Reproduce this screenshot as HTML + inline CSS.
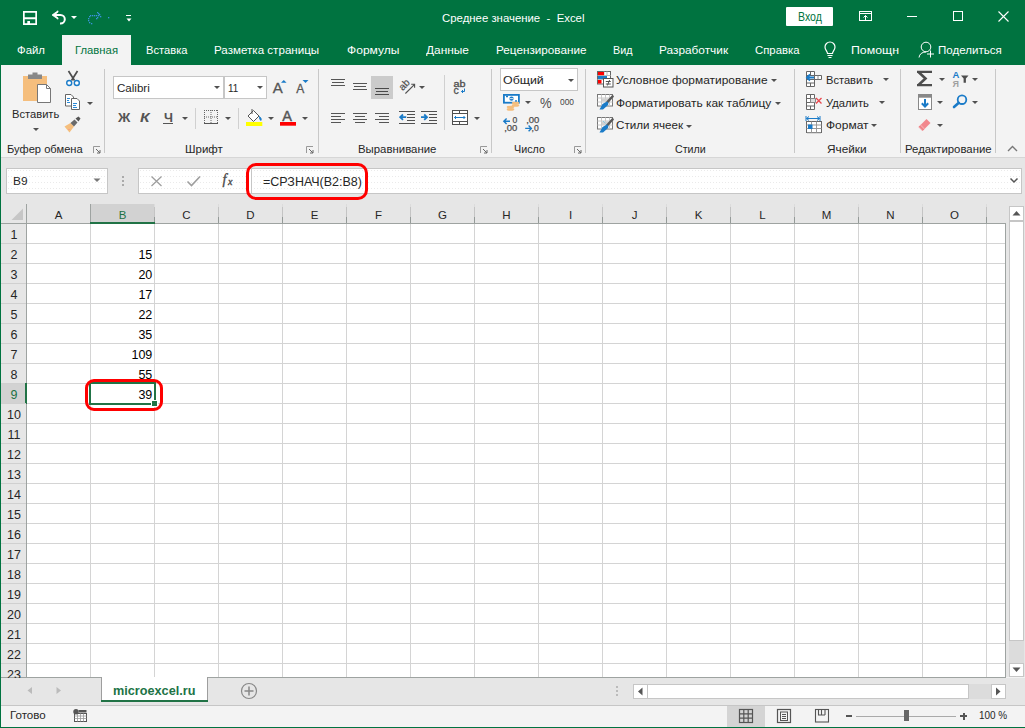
<!DOCTYPE html>
<html><head><meta charset="utf-8">
<style>
*{margin:0;padding:0;box-sizing:border-box}
html,body{width:1025px;height:728px;overflow:hidden;background:#F3F3F3;font-family:"Liberation Sans",sans-serif;color:#262626}
.a{position:absolute;display:block}
.t{position:absolute;white-space:nowrap}
</style></head><body>

<div class="a" style="left:0px;top:0px;width:1025px;height:65px;background:#007340;"></div>
<svg class="a" style="left:23px;top:11px;" width="14" height="14" viewBox="0 0 14 14"><path fill="#fff" fill-rule="evenodd" d="M0 0h14v14h-14z M1.7 1.7v4.5h10.6v-4.5z M1.7 8.3v4h2.6v-2.4h2.7v2.4h5.3v-4z"/></svg>
<svg class="a" style="left:50px;top:9px;" width="18" height="17" viewBox="0 0 18 17"><path d="M3.5 6H10.5a4.3 4.3 0 0 1 0 8.6H10" fill="none" stroke="#fff" stroke-width="2"/><path d="M2 6L8 1.8V3.2L4.2 6L8 8.8V10.2z" fill="#fff" stroke="#fff" stroke-width="0.8"/></svg>
<svg class="a" style="left:70.5px;top:16px;" width="6" height="3.0" viewBox="0 0 6 3.0"><path d="M0 0h6l-3.0 3.0z" fill="#fff"/></svg>
<svg class="a" style="left:86px;top:10px;" width="24" height="16" viewBox="0 0 24 16"><rect x="11" y="2" width="1.3" height="1.3" fill="#3A92DC"/><rect x="12" y="3" width="1.3" height="1.3" fill="#3A92DC"/><rect x="13" y="4" width="1.3" height="1.3" fill="#3A92DC"/><rect x="14" y="6" width="1.3" height="1.3" fill="#3A92DC"/><rect x="12" y="5" width="1.3" height="1.3" fill="#3A92DC"/><rect x="11" y="7" width="1.3" height="1.3" fill="#3A92DC"/><rect x="10" y="8" width="1.3" height="1.3" fill="#3A92DC"/><rect x="4" y="5" width="1.3" height="1.3" fill="#3A92DC"/><rect x="6" y="5" width="1.3" height="1.3" fill="#3A92DC"/><rect x="8" y="5" width="1.3" height="1.3" fill="#3A92DC"/><rect x="10" y="5" width="1.3" height="1.3" fill="#3A92DC"/><rect x="3" y="6" width="1.3" height="1.3" fill="#3A92DC"/><rect x="2" y="8" width="1.3" height="1.3" fill="#3A92DC"/><rect x="2" y="10" width="1.3" height="1.3" fill="#3A92DC"/><rect x="3" y="12" width="1.3" height="1.3" fill="#3A92DC"/><rect x="5" y="13" width="1.3" height="1.3" fill="#3A92DC"/><rect x="22" y="7" width="1.3" height="1.3" fill="#3A92DC"/></svg>
<div class="a" style="left:126px;top:15px;width:5px;height:1px;background:#fff;"></div>
<svg class="a" style="left:125.5px;top:17.5px;" width="6" height="4" viewBox="0 0 6 4"><path d="M0.5 0.5h5l-2.5 3z" fill="#fff"/></svg>
<div class="t" style="left:442.00px;top:11.00px;font-size:11.8px;line-height:15px;color:#fff;transform:scaleX(0.9649);transform-origin:0 0;">Среднее значение&nbsp; - &nbsp;Excel</div>
<div class="a" style="left:786px;top:7px;width:47px;height:19px;background:#fff;border-radius:1px"></div>
<div class="t" style="left:797.50px;top:9.00px;font-size:12.5px;line-height:16px;color:#007340;transform:scaleX(0.8425);transform-origin:0 0;">Вход</div>
<svg class="a" style="left:859px;top:11px;" width="14" height="11" viewBox="0 0 14 11"><rect x="0.5" y="0.5" width="12" height="9" fill="none" stroke="#fff"/><path d="M1 2.5h11" stroke="#fff"/><path d="M6.5 4.5v5" stroke="#fff"/><path d="M4.5 6.5l2-2l2 2" fill="none" stroke="#fff"/></svg>
<div class="a" style="left:907px;top:16px;width:10px;height:1px;background:#fff;"></div>
<svg class="a" style="left:952px;top:10px;" width="12" height="12" viewBox="0 0 12 12"><rect x="1.5" y="1.5" width="9" height="9" fill="none" stroke="#fff"/></svg>
<svg class="a" style="left:997px;top:10px;" width="13" height="13" viewBox="0 0 13 13"><path d="M1.5 1.5L11.5 11.5M11.5 1.5L1.5 11.5" stroke="#fff" stroke-width="1.1"/></svg>
<div class="a" style="left:62px;top:35px;width:69px;height:30px;background:#F3F3F3;"></div>
<div class="t" style="left:16.50px;top:43.00px;font-size:11.8px;line-height:15px;color:#fff;transform:scaleX(0.9646);transform-origin:0 0;">Файл</div>
<div class="t" style="left:145.50px;top:43.00px;font-size:11.8px;line-height:15px;color:#fff;transform:scaleX(0.9454);transform-origin:0 0;">Вставка</div>
<div class="t" style="left:213.80px;top:43.00px;font-size:11.8px;line-height:15px;color:#fff;transform:scaleX(0.9829);transform-origin:0 0;">Разметка страницы</div>
<div class="t" style="left:346.50px;top:43.00px;font-size:11.8px;line-height:15px;color:#fff;transform:scaleX(1.0228);transform-origin:0 0;">Формулы</div>
<div class="t" style="left:426.00px;top:43.00px;font-size:11.8px;line-height:15px;color:#fff;transform:scaleX(1.0080);transform-origin:0 0;">Данные</div>
<div class="t" style="left:495.50px;top:43.00px;font-size:11.8px;line-height:15px;color:#fff;transform:scaleX(0.9935);transform-origin:0 0;">Рецензирование</div>
<div class="t" style="left:612.50px;top:43.00px;font-size:11.8px;line-height:15px;color:#fff;transform:scaleX(0.9130);transform-origin:0 0;">Вид</div>
<div class="t" style="left:658.80px;top:43.00px;font-size:11.8px;line-height:15px;color:#fff;transform:scaleX(1.0042);transform-origin:0 0;">Разработчик</div>
<div class="t" style="left:754.50px;top:43.00px;font-size:11.8px;line-height:15px;color:#fff;transform:scaleX(0.9608);transform-origin:0 0;">Справка</div>
<div class="t" style="left:850.50px;top:43.00px;font-size:11.8px;line-height:15px;color:#fff;transform:scaleX(1.0444);transform-origin:0 0;">Помощн</div>
<div class="t" style="left:938.00px;top:43.00px;font-size:11.8px;line-height:15px;color:#fff;transform:scaleX(0.9780);transform-origin:0 0;">Поделиться</div>
<div class="t" style="left:74.50px;top:43.00px;font-size:11.8px;line-height:15px;color:#007340;transform:scaleX(0.9577);transform-origin:0 0;">Главная</div>
<svg class="a" style="left:823px;top:41px;" width="14" height="19" viewBox="0 0 14 19"><path d="M4.5 12.5C4.5 10.5 2 9 2 6a5 5 0 0 1 10 0C12 9 9.5 10.5 9.5 12.5z" fill="none" stroke="#fff" stroke-width="1.2"/><path d="M4.5 14.5h5M5.5 16.5h3" stroke="#fff" stroke-width="1.1"/></svg>
<svg class="a" style="left:917px;top:41px;" width="19" height="18" viewBox="0 0 19 18"><circle cx="9" cy="6" r="4.8" fill="none" stroke="#fff" stroke-width="1"/><path d="M2 16.5C2.5 13 5 11 9 11" fill="none" stroke="#fff" stroke-width="1"/><path d="M13.5 9.5v7M10 13h7" stroke="#fff" stroke-width="1"/></svg>
<div class="a" style="left:0px;top:65px;width:1025px;height:92px;background:#F3F3F3;"></div>
<div class="a" style="left:0px;top:65px;width:1px;height:663px;background:#007340;"></div>
<div class="a" style="left:1px;top:157px;width:1024px;height:1px;background:#D6D6D6;"></div>
<div class="a" style="left:104px;top:69px;width:1px;height:84px;background:#C8C8C8;"></div>
<svg class="a" style="left:22px;top:72px;" width="30" height="32" viewBox="0 0 30 32"><rect x="1" y="4" width="24" height="25" fill="#F5BE7D"/><path d="M6 2.5h14v4.5H6z" fill="#888"/><rect x="10.5" y="0.5" width="5" height="3" fill="#888"/><path d="M15.5 12.5h9l4 4v14h-13z" fill="#fff" stroke="#777" stroke-width="1"/><path d="M24.5 12.5v4h4" fill="none" stroke="#777"/></svg>
<div class="t" style="left:11.50px;top:107.00px;font-size:11.8px;line-height:15px;color:#262626;transform:scaleX(0.9454);transform-origin:0 0;">Вставить</div>
<svg class="a" style="left:32.5px;top:128px;" width="6" height="3.0" viewBox="0 0 6 3.0"><path d="M0 0h6l-3.0 3.0z" fill="#505050"/></svg>
<svg class="a" style="left:65px;top:70px;" width="16" height="17" viewBox="0 0 16 17"><path d="M3.5 1L9.5 10.5M12.5 1L6.5 10.5" stroke="#4D4D4D" stroke-width="1.7"/><circle cx="4.2" cy="13" r="2.5" fill="#fff" stroke="#1A7BC8" stroke-width="1.4"/><circle cx="11.8" cy="13" r="2.5" fill="#fff" stroke="#1A7BC8" stroke-width="1.4"/></svg>
<svg class="a" style="left:64px;top:94px;" width="17" height="16" viewBox="0 0 17 16"><path d="M1.5 0.5h5.5l2.5 2.5v9h-8z" fill="#fff" stroke="#666"/><path d="M7.5 4.5h5.5l2.5 2.5v8.5h-8z" fill="#fff" stroke="#666"/><path d="M3 4.5h3M3 6.5h2M3 8.5h3M9 9.5h4M9 11.5h3M9 13.5h4" stroke="#2B8AD6"/></svg>
<svg class="a" style="left:86.5px;top:102px;" width="6" height="3.0" viewBox="0 0 6 3.0"><path d="M0 0h6l-3.0 3.0z" fill="#505050"/></svg>
<svg class="a" style="left:63px;top:116px;" width="20" height="18" viewBox="0 0 20 18"><path d="M1.5 10.5L7.5 7L11 10.5L6.5 16.5z" fill="#F5BE7D"/><path d="M7.5 7L11.5 3.5L14.5 6.5L11 10.5z" fill="#6A6A6A"/><path d="M12.5 2.5L15.5 0.5L17.5 2.5L15.5 5.5z" fill="#555"/><path d="M5.5 14l1-1" stroke="#F08A8F" stroke-width="1"/></svg>
<div class="t" style="left:6.60px;top:142.00px;font-size:11.2px;line-height:14px;color:#262626;transform:scaleX(0.9953);transform-origin:0 0;">Буфер обмена</div>
<svg class="a" style="left:93px;top:146px;" width="8" height="8" viewBox="0 0 8 8"><path d="M0.5 7V0.5H7" fill="none" stroke="#999" stroke-width="1"/><path d="M3 3L7 7M7 4v3H4" fill="none" stroke="#666" stroke-width="1"/></svg>
<div class="a" style="left:318px;top:69px;width:1px;height:84px;background:#C8C8C8;"></div>
<div class="a" style="left:113px;top:76px;width:111px;height:23px;background:#fff;border:1px solid #C6C6C6"></div>
<div class="a" style="left:224px;top:76px;width:43px;height:23px;background:#fff;border:1px solid #C6C6C6"></div>
<div class="t" style="left:116.80px;top:81.00px;font-size:11.8px;line-height:15px;color:#262626;transform:scaleX(0.9805);transform-origin:0 0;">Calibri</div>
<svg class="a" style="left:213.5px;top:86px;" width="6" height="3.0" viewBox="0 0 6 3.0"><path d="M0 0h6l-3.0 3.0z" fill="#505050"/></svg>
<div class="t" style="left:227.70px;top:81.00px;font-size:11.8px;line-height:15px;color:#262626;transform:scaleX(0.8393);transform-origin:0 0;">11</div>
<svg class="a" style="left:256.5px;top:86px;" width="6" height="3.0" viewBox="0 0 6 3.0"><path d="M0 0h6l-3.0 3.0z" fill="#505050"/></svg>
<svg class="a" style="left:272px;top:78px;" width="16" height="16" viewBox="0 0 16 16"><text x="0.8" y="15" font-family="Liberation Sans" font-size="15" fill="#555" stroke="#555" stroke-width="0.3">A</text><path d="M9 4.8l2.8-2.8l2.8 2.8z" fill="#1A7BC8"/></svg>
<svg class="a" style="left:295px;top:78px;" width="14" height="16" viewBox="0 0 14 16"><text x="1.2" y="15" font-family="Liberation Sans" font-size="12" fill="#555" stroke="#555" stroke-width="0.3">A</text><path d="M7.5 2h6l-3 3z" fill="#1A7BC8"/></svg>
<div class="t" style="left:117.97px;top:110.00px;font-size:12.5px;line-height:16px;color:#555;font-weight:bold;transform:scaleX(1.0929);transform-origin:0 0;">Ж</div>
<div class="t" style="left:140.40px;top:110.00px;font-size:12.5px;line-height:16px;color:#555;font-weight:bold;transform:scaleX(1.2488);transform-origin:0 0;font-style:italic;">К</div>
<div class="t" style="left:163.50px;top:110.00px;font-size:12.5px;line-height:16px;color:#555;font-weight:bold;transform:scaleX(1.0213);transform-origin:0 0;">Ч</div>
<div class="a" style="left:163px;top:123px;width:10px;height:1px;background:#555;"></div>
<svg class="a" style="left:181.5px;top:116.5px;" width="6" height="3.0" viewBox="0 0 6 3.0"><path d="M0 0h6l-3.0 3.0z" fill="#505050"/></svg>
<div class="a" style="left:195px;top:108px;width:1px;height:21px;background:#D0D0D0;"></div>
<svg class="a" style="left:204px;top:110px;" width="14" height="14" viewBox="0 0 14 14"><path d="M0.5 0v13M13.5 0v13M7 0v13M0 0.5h14M0 7h14" fill="none" stroke="#666" stroke-width="1" stroke-dasharray="1 1"/><path d="M0 13.5h14" stroke="#555" stroke-width="1"/></svg>
<svg class="a" style="left:224.5px;top:116.5px;" width="6" height="3.0" viewBox="0 0 6 3.0"><path d="M0 0h6l-3.0 3.0z" fill="#505050"/></svg>
<div class="a" style="left:238px;top:108px;width:1px;height:21px;background:#D0D0D0;"></div>
<svg class="a" style="left:245px;top:108px;" width="19" height="19" viewBox="0 0 19 19"><path d="M3 8L8.5 2.5L14 8L8.5 13.5z" fill="#fff" stroke="#555"/><path d="M7 1v5" stroke="#555"/><path d="M14.5 8.5c1.5 1.5 2 2.5 1.5 4c-1-0.5-1.5-2-1.5-4z" fill="#1A7BC8" stroke="#1A7BC8"/><rect x="1" y="14" width="16.3" height="4" fill="#FFFF00"/></svg>
<svg class="a" style="left:267.5px;top:116.5px;" width="6" height="3.0" viewBox="0 0 6 3.0"><path d="M0 0h6l-3.0 3.0z" fill="#505050"/></svg>
<svg class="a" style="left:279px;top:107px;" width="18" height="19" viewBox="0 0 18 19"><text x="3.2" y="14" font-family="Liberation Sans" font-size="14.5" fill="#555" stroke="#555" stroke-width="0.4">A</text><rect x="1" y="15" width="16" height="3.7" fill="#FF0000"/></svg>
<svg class="a" style="left:302.0px;top:116.5px;" width="6" height="3.0" viewBox="0 0 6 3.0"><path d="M0 0h6l-3.0 3.0z" fill="#505050"/></svg>
<div class="t" style="left:184.80px;top:142.00px;font-size:11.2px;line-height:14px;color:#262626;transform:scaleX(1.0258);transform-origin:0 0;">Шрифт</div>
<svg class="a" style="left:306px;top:146px;" width="8" height="8" viewBox="0 0 8 8"><path d="M0.5 7V0.5H7" fill="none" stroke="#999" stroke-width="1"/><path d="M3 3L7 7M7 4v3H4" fill="none" stroke="#666" stroke-width="1"/></svg>
<div class="a" style="left:491px;top:69px;width:1px;height:84px;background:#C8C8C8;"></div>
<div class="a" style="left:444px;top:75px;width:1px;height:55px;background:#D0D0D0;"></div>
<svg class="a" style="left:331px;top:79px;" width="16" height="11" viewBox="0 0 16 11"><rect x="0" y="0" width="14" height="1" fill="#555"/><rect x="1" y="3" width="12" height="1" fill="#555"/><rect x="0" y="6" width="14" height="1" fill="#555"/></svg>
<svg class="a" style="left:353px;top:83px;" width="16" height="11" viewBox="0 0 16 11"><rect x="0" y="0" width="14" height="1" fill="#555"/><rect x="1" y="3" width="12" height="1" fill="#555"/><rect x="0" y="6" width="14" height="1" fill="#555"/></svg>
<div class="a" style="left:371px;top:76px;width:22px;height:23px;background:#CBCBCB;"></div>
<svg class="a" style="left:375px;top:88px;" width="16" height="11" viewBox="0 0 16 11"><rect x="0" y="0" width="14" height="1" fill="#4A4A4A"/><rect x="1" y="3" width="12" height="1" fill="#4A4A4A"/><rect x="0" y="6" width="14" height="1" fill="#4A4A4A"/></svg>
<svg class="a" style="left:398px;top:77px;" width="20" height="18" viewBox="0 0 20 18"><g transform="rotate(-45 6.5 8)"><text x="6.5" y="11" text-anchor="middle" font-family="Liberation Sans" font-size="10" fill="#505050" stroke="#505050" stroke-width="0.2">ab</text></g><path d="M7.4 16.5L16.6 7.3M13.2 7.3h3.4v3.4" fill="none" stroke="#505050" stroke-width="1.1"/></svg>
<svg class="a" style="left:419.0px;top:85.5px;" width="6" height="3.0" viewBox="0 0 6 3.0"><path d="M0 0h6l-3.0 3.0z" fill="#505050"/></svg>
<svg class="a" style="left:452px;top:78px;" width="16" height="17" viewBox="0 0 16 17"><text x="1.6" y="8.6" textLength="12" lengthAdjust="spacingAndGlyphs" font-family="Liberation Sans" font-size="8.2" fill="#505050" stroke="#505050" stroke-width="0.3">ab</text><text x="1.4" y="15.6" font-family="Liberation Sans" font-size="10.5" fill="#505050" stroke="#505050" stroke-width="0.3">c</text><path d="M12.5 10.5v3H9.5M11 12l-1.5 1.5L11 15" fill="none" stroke="#1A7BC8" stroke-width="1"/></svg>
<svg class="a" style="left:331px;top:113px;" width="16" height="14" viewBox="0 0 16 14"><rect x="0" y="0" width="14" height="1" fill="#555"/><rect x="0" y="3" width="10" height="1" fill="#555"/><rect x="0" y="6" width="14" height="1" fill="#555"/><rect x="0" y="9" width="10" height="1" fill="#555"/></svg>
<svg class="a" style="left:353px;top:113px;" width="16" height="14" viewBox="0 0 16 14"><rect x="0" y="0" width="14" height="1" fill="#555"/><rect x="2" y="3" width="10" height="1" fill="#555"/><rect x="0" y="6" width="14" height="1" fill="#555"/><rect x="2" y="9" width="10" height="1" fill="#555"/></svg>
<svg class="a" style="left:375px;top:113px;" width="16" height="14" viewBox="0 0 16 14"><rect x="0" y="0" width="14" height="1" fill="#555"/><rect x="4" y="3" width="10" height="1" fill="#555"/><rect x="0" y="6" width="14" height="1" fill="#555"/><rect x="4" y="9" width="10" height="1" fill="#555"/></svg>
<svg class="a" style="left:399px;top:111px;" width="17" height="14" viewBox="0 0 17 14"><path d="M0 0.5h16M8 3.5h8M8 6.5h8M8 9.5h8M0 12.5h16" stroke="#505050" stroke-width="1"/><path d="M1.2 6.2h6M4 3.5L1.2 6.2L4 8.9" fill="none" stroke="#1A7BC8" stroke-width="1.8"/></svg>
<svg class="a" style="left:421px;top:111px;" width="17" height="14" viewBox="0 0 17 14"><path d="M0 0.5h16M8 3.5h8M8 6.5h8M8 9.5h8M0 12.5h16" stroke="#505050" stroke-width="1"/><path d="M0 6.2h6M3.2 3.5L6 6.2L3.2 8.9" fill="none" stroke="#1A7BC8" stroke-width="1.8"/></svg>
<svg class="a" style="left:452px;top:110px;" width="16" height="16" viewBox="0 0 16 16"><rect x="0.5" y="0.5" width="15" height="14" fill="#fff" stroke="#505050"/><path d="M0.5 3.5h15M0.5 11.5h15M7.5 0.5v3M7.5 11.5v3" stroke="#505050"/><path d="M2.5 7.5h10.5M4 6L2.5 7.5L4 9M11.5 6L13 7.5L11.5 9" fill="none" stroke="#1A7BC8"/></svg>
<svg class="a" style="left:473.5px;top:116.5px;" width="6" height="3.0" viewBox="0 0 6 3.0"><path d="M0 0h6l-3.0 3.0z" fill="#505050"/></svg>
<div class="t" style="left:357.80px;top:142.00px;font-size:11.2px;line-height:14px;color:#262626;transform:scaleX(1.0180);transform-origin:0 0;">Выравнивание</div>
<svg class="a" style="left:480px;top:146px;" width="8" height="8" viewBox="0 0 8 8"><path d="M0.5 7V0.5H7" fill="none" stroke="#999" stroke-width="1"/><path d="M3 3L7 7M7 4v3H4" fill="none" stroke="#666" stroke-width="1"/></svg>
<div class="a" style="left:585px;top:69px;width:1px;height:84px;background:#C8C8C8;"></div>
<div class="a" style="left:500px;top:68px;width:78px;height:23px;background:#fff;border:1px solid #C6C6C6"></div>
<div class="t" style="left:503.20px;top:73.00px;font-size:11.8px;line-height:15px;color:#262626;transform:scaleX(1.0510);transform-origin:0 0;">Общий</div>
<svg class="a" style="left:567.5px;top:79px;" width="6" height="3.0" viewBox="0 0 6 3.0"><path d="M0 0h6l-3.0 3.0z" fill="#505050"/></svg>
<svg class="a" style="left:502px;top:93px;" width="19" height="19" viewBox="0 0 19 19"><rect x="1.9" y="1.9" width="15" height="7.8" fill="#fff" stroke="#1A7BC8" stroke-width="1.8"/><path d="M4 3.5h2M13 8h2" stroke="#1A7BC8" stroke-width="1.5"/><circle cx="9.5" cy="5.6" r="2.2" fill="#1A7BC8"/><path d="M7.5 5.6h4" stroke="#fff" stroke-width="0.8"/><ellipse cx="13.5" cy="10" rx="3.8" ry="1.3" fill="#F5BE7D"/><ellipse cx="13.5" cy="12.4" rx="3.8" ry="1.3" fill="#F5BE7D"/><ellipse cx="8.5" cy="14" rx="3.8" ry="1.3" fill="#F5BE7D"/><ellipse cx="8.5" cy="16.4" rx="3.8" ry="1.3" fill="#F5BE7D"/></svg>
<svg class="a" style="left:524.5px;top:101px;" width="6" height="3.0" viewBox="0 0 6 3.0"><path d="M0 0h6l-3.0 3.0z" fill="#505050"/></svg>
<div class="t" style="left:539.60px;top:94.00px;font-size:14px;line-height:18px;color:#505050;transform:scaleX(0.9310);transform-origin:0 0;">%</div>
<div class="t" style="left:560.00px;top:96.55px;font-size:8.5px;line-height:11px;color:#444;transform:scaleX(0.9863);transform-origin:0 0;">000</div>
<svg class="a" style="left:502px;top:116px;" width="18" height="17" viewBox="0 0 18 17"><path d="M1.8 5.2h6.2M4.6 2.4L1.8 5.2L4.6 8" fill="none" stroke="#1A7BC8" stroke-width="1.4"/><g font-family="Liberation Sans" font-size="8.6" fill="#505050" stroke="#505050" stroke-width="0.25"><text x="10.6" y="7.4">0</text><text x="2.2" y="15.3" textLength="13.2" lengthAdjust="spacingAndGlyphs">,00</text></g></svg>
<svg class="a" style="left:524px;top:116px;" width="18" height="17" viewBox="0 0 18 17"><g font-family="Liberation Sans" font-size="8.6" fill="#505050" stroke="#505050" stroke-width="0.25"><text x="2.2" y="7.4" textLength="13.2" lengthAdjust="spacingAndGlyphs">,00</text><text x="7.5" y="15.3">,0</text></g><path d="M1.2 12.4h6M4.6 9.6L7.4 12.4L4.6 15.2" fill="none" stroke="#1A7BC8" stroke-width="1.4"/></svg>
<div class="t" style="left:514.40px;top:142.00px;font-size:11.2px;line-height:14px;color:#262626;transform:scaleX(0.9627);transform-origin:0 0;">Число</div>
<svg class="a" style="left:574px;top:146px;" width="8" height="8" viewBox="0 0 8 8"><path d="M0.5 7V0.5H7" fill="none" stroke="#999" stroke-width="1"/><path d="M3 3L7 7M7 4v3H4" fill="none" stroke="#666" stroke-width="1"/></svg>
<div class="a" style="left:794px;top:69px;width:1px;height:84px;background:#C8C8C8;"></div>
<svg class="a" style="left:596px;top:70px;" width="18" height="18" viewBox="0 0 18 18"><rect x="1.5" y="1.5" width="13" height="12.5" fill="#fff" stroke="#666"/><path d="M1.5 5.5h13M1.5 9.5h13M8 1.5v12.5M11 1.5v4" stroke="#BBB"/><rect x="2" y="2" width="6" height="3.2" fill="#FF0000"/><rect x="2" y="6" width="9" height="3" fill="#1A7BC8"/><rect x="2" y="10" width="3.5" height="3.5" fill="#FF0000"/><rect x="7.5" y="8.5" width="9.5" height="8.5" fill="#fff" stroke="#555"/><path d="M9.8 11.5h5M9.8 14h5M13.6 10l-2.2 5.5" stroke="#444" stroke-width="0.9"/></svg>
<div class="t" style="left:616.40px;top:73.00px;font-size:11.5px;line-height:14px;color:#262626;transform:scaleX(1.0364);transform-origin:0 0;">Условное форматирование</div>
<svg class="a" style="left:770.8px;top:78.5px;" width="6" height="3.0" viewBox="0 0 6 3.0"><path d="M0 0h6l-3.0 3.0z" fill="#505050"/></svg>
<svg class="a" style="left:596px;top:93px;" width="18" height="18" viewBox="0 0 18 18"><rect x="1.5" y="1.5" width="15" height="11.5" fill="#fff" stroke="#777"/><path d="M1.5 5h15M1.5 9h15M5.5 1.5v11.5M9.5 1.5v11.5M13.5 1.5v11.5" stroke="#C8C8C8"/><rect x="6" y="5.5" width="7" height="3" fill="#D0D0D0"/><path d="M16.5 3.5L11.5 9" stroke="#5A5A5A" stroke-width="2.6" stroke-linecap="round"/><path d="M11 8.5c1.5 1 2 2.5 0.5 4L7 16.5H3.5c1-1.5 1.5-3 3-5.5z" fill="#1A7BC8"/></svg>
<div class="t" style="left:616.40px;top:96.00px;font-size:11.5px;line-height:14px;color:#262626;transform:scaleX(1.0380);transform-origin:0 0;">Форматировать как таблицу</div>
<svg class="a" style="left:774.5px;top:101.5px;" width="6" height="3.0" viewBox="0 0 6 3.0"><path d="M0 0h6l-3.0 3.0z" fill="#505050"/></svg>
<svg class="a" style="left:596px;top:116px;" width="18" height="18" viewBox="0 0 18 18"><rect x="1.5" y="1.5" width="15" height="11.5" fill="#fff" stroke="#777"/><path d="M1.5 5h15M1.5 9h15M5.5 1.5v11.5M9.5 1.5v11.5M13.5 1.5v11.5" stroke="#C8C8C8"/><rect x="6" y="5.5" width="7" height="3.5" fill="#D0D0D0"/><path d="M7 5l4 4" stroke="#5BC0EB" stroke-dasharray="1 1"/><path d="M16.5 3.5L11.5 9" stroke="#5A5A5A" stroke-width="2.6" stroke-linecap="round"/><path d="M11 8.5c1.5 1 2 2.5 0.5 4L7 16.5H3.5c1-1.5 1.5-3 3-5.5z" fill="#1A7BC8"/></svg>
<div class="t" style="left:616.40px;top:118.00px;font-size:11.5px;line-height:14px;color:#262626;transform:scaleX(1.0110);transform-origin:0 0;">Стили ячеек</div>
<svg class="a" style="left:686.3px;top:124.5px;" width="6" height="3.0" viewBox="0 0 6 3.0"><path d="M0 0h6l-3.0 3.0z" fill="#505050"/></svg>
<div class="t" style="left:674.80px;top:142.00px;font-size:11.2px;line-height:14px;color:#262626;transform:scaleX(0.9549);transform-origin:0 0;">Стили</div>
<div class="a" style="left:900px;top:69px;width:1px;height:84px;background:#C8C8C8;"></div>
<svg class="a" style="left:805px;top:70px;" width="18" height="18" viewBox="0 0 18 18"><path d="M1.5 1.5h8v15h-8z" fill="#fff" stroke="#666"/><path d="M1.5 5.5h8M1.5 9.5h8M1.5 13h8M5.5 1.5v3.5M5.5 13v3.5" stroke="#666"/><path d="M9.5 5.5h7v4h-7z" fill="#fff" stroke="#666"/><path d="M13 5.5v4" stroke="#888"/><path d="M2 7.5h7M5 4.5L2 7.5L5 10.5" fill="none" stroke="#1A7BC8" stroke-width="1.8"/></svg>
<div class="t" style="left:825.50px;top:73.00px;font-size:11.5px;line-height:14px;color:#262626;transform:scaleX(0.9639);transform-origin:0 0;">Вставить</div>
<svg class="a" style="left:882.5px;top:78px;" width="6" height="3.0" viewBox="0 0 6 3.0"><path d="M0 0h6l-3.0 3.0z" fill="#505050"/></svg>
<svg class="a" style="left:805px;top:93px;" width="18" height="18" viewBox="0 0 18 18"><path d="M1.5 1.5h8v15h-8z" fill="#fff" stroke="#666"/><path d="M1.5 5.5h8M1.5 9.5h8M1.5 13h8M5.5 1.5v3.5M5.5 13v3.5" stroke="#666"/><path d="M5.5 5.5h5v4h-5z" fill="#ddd" stroke="#888"/><path d="M11 5l5.5 5.5M16.5 5L11 10.5" stroke="#E8474D" stroke-width="1.3"/></svg>
<div class="t" style="left:825.50px;top:96.00px;font-size:11.5px;line-height:14px;color:#262626;transform:scaleX(0.9766);transform-origin:0 0;">Удалить</div>
<svg class="a" style="left:878.5px;top:101px;" width="6" height="3.0" viewBox="0 0 6 3.0"><path d="M0 0h6l-3.0 3.0z" fill="#505050"/></svg>
<svg class="a" style="left:805px;top:116px;" width="18" height="18" viewBox="0 0 18 18"><path d="M1.5 2.5h13" stroke="#1A7BC8" stroke-width="1"/><path d="M1 0v5M15 0v5" stroke="#1A7BC8"/><path d="M4 0.5L1.5 2.5L4 4.5M12 0.5L14.5 2.5L12 4.5" fill="none" stroke="#1A7BC8"/><rect x="1.5" y="5.5" width="15" height="11" fill="#fff" stroke="#666"/><path d="M1.5 9h15M1.5 12.5h15M6.5 5.5v11M11.5 5.5v11" stroke="#999"/><rect x="3" y="8.5" width="4.5" height="4.5" fill="#1A7BC8"/><path d="M2 16.8h14" stroke="#999"/></svg>
<div class="t" style="left:825.50px;top:118.00px;font-size:11.5px;line-height:14px;color:#262626;transform:scaleX(1.0410);transform-origin:0 0;">Формат</div>
<svg class="a" style="left:870.5px;top:124px;" width="6" height="3.0" viewBox="0 0 6 3.0"><path d="M0 0h6l-3.0 3.0z" fill="#505050"/></svg>
<div class="t" style="left:827.10px;top:142.00px;font-size:11.2px;line-height:14px;color:#262626;transform:scaleX(1.0565);transform-origin:0 0;">Ячейки</div>
<div class="a" style="left:995px;top:69px;width:1px;height:84px;background:#C8C8C8;"></div>
<svg class="a" style="left:916px;top:70px;" width="18" height="17" viewBox="0 0 18 17"><path d="M1 1.8h15M1 15.2h15" stroke="#4D4D4D" stroke-width="2.2"/><path d="M2.5 2L9.5 8.5L2.5 15" fill="none" stroke="#4D4D4D" stroke-width="2.6"/></svg>
<svg class="a" style="left:938.5px;top:78px;" width="6" height="3.0" viewBox="0 0 6 3.0"><path d="M0 0h6l-3.0 3.0z" fill="#505050"/></svg>
<svg class="a" style="left:952px;top:70px;" width="18" height="18" viewBox="0 0 18 18"><text x="0.6" y="8" font-family="Liberation Sans" font-size="9.5" font-weight="bold" fill="#1A7BC8">A</text><text x="0.6" y="16.8" font-family="Liberation Sans" font-size="9" font-weight="bold" fill="#A0A0A0">Я</text><path d="M9 5.6h7.5l-2.6 3v4.2h-2.3v-4.2z" fill="#4D4D4D"/></svg>
<svg class="a" style="left:971.5px;top:78px;" width="6" height="3.0" viewBox="0 0 6 3.0"><path d="M0 0h6l-3.0 3.0z" fill="#505050"/></svg>
<svg class="a" style="left:917px;top:93px;" width="16" height="17" viewBox="0 0 16 17"><rect x="1.5" y="1.5" width="13" height="15" fill="#fff" stroke="#888"/><rect x="1" y="1" width="14" height="3.7" fill="#888"/><path d="M8 6v7.5M4.8 10.3L8 13.5L11.2 10.3" fill="none" stroke="#1A7BC8" stroke-width="2"/></svg>
<svg class="a" style="left:936.5px;top:101px;" width="6" height="3.0" viewBox="0 0 6 3.0"><path d="M0 0h6l-3.0 3.0z" fill="#505050"/></svg>
<svg class="a" style="left:952px;top:93px;" width="17" height="17" viewBox="0 0 17 17"><circle cx="10" cy="6.7" r="4.3" fill="none" stroke="#1A7BC8" stroke-width="1.8"/><path d="M6.8 9.8L2 14" stroke="#1A7BC8" stroke-width="2.6" stroke-linecap="round"/></svg>
<svg class="a" style="left:971.5px;top:101px;" width="6" height="3.0" viewBox="0 0 6 3.0"><path d="M0 0h6l-3.0 3.0z" fill="#505050"/></svg>
<svg class="a" style="left:917px;top:116px;" width="16" height="16" viewBox="0 0 16 16"><path d="M1.5 11L9.5 3L13.5 7L5.5 15z" fill="#F2878D"/><path d="M1.5 11L4 8.5L8 12.5L5.5 15z" fill="#F5A3A7"/><path d="M2.5 10l4 4" stroke="#E86A70" stroke-width="1"/></svg>
<svg class="a" style="left:936.5px;top:124px;" width="6" height="3.0" viewBox="0 0 6 3.0"><path d="M0 0h6l-3.0 3.0z" fill="#505050"/></svg>
<div class="t" style="left:904.60px;top:142.00px;font-size:11.2px;line-height:14px;color:#262626;transform:scaleX(1.0159);transform-origin:0 0;">Редактирование</div>
<svg class="a" style="left:1007px;top:145px;" width="11" height="7" viewBox="0 0 11 7"><path d="M1 6L5.5 1.5L10 6" fill="none" stroke="#777" stroke-width="1.4"/></svg>
<div class="a" style="left:1px;top:158px;width:1024px;height:46px;background:#E6E6E6;"></div>
<div class="a" style="left:6px;top:168px;width:102px;height:26px;background:#fff;border:1px solid #C6C6C6;background-image:radial-gradient(circle at 1.5px 1.5px,#EAEAEA 0.5px,transparent 0.9px);background-size:3px 6px"></div>
<div class="t" style="left:13.30px;top:174.00px;font-size:11.5px;line-height:14px;color:#262626;transform:scaleX(1.0364);transform-origin:0 0;">B9</div>
<svg class="a" style="left:93px;top:178px;" width="9" height="5" viewBox="0 0 9 5"><path d="M0.5 0.5h7l-3.5 3.5z" fill="#777"/></svg>
<div class="a" style="left:122px;top:176px;width:2px;height:2px;background:#AAAAAA;"></div>
<div class="a" style="left:122px;top:180px;width:2px;height:2px;background:#AAAAAA;"></div>
<div class="a" style="left:122px;top:184px;width:2px;height:2px;background:#AAAAAA;"></div>
<div class="a" style="left:138px;top:168px;width:884px;height:26px;background:#fff;border:1px solid #C6C6C6;background-image:radial-gradient(circle at 1.5px 1.5px,#EAEAEA 0.5px,transparent 0.9px);background-size:3px 6px"></div>
<div class="a" style="left:251px;top:169px;width:1px;height:24px;background:#C6C6C6;"></div>
<svg class="a" style="left:150px;top:175px;" width="13" height="12" viewBox="0 0 13 12"><path d="M1.5 1.5L11.5 11M11.5 1.5L1.5 11" stroke="#9E9E9E" stroke-width="1.3"/></svg>
<svg class="a" style="left:186px;top:175px;" width="15" height="12" viewBox="0 0 15 12"><path d="M1.5 6.5L5.5 10.5L14 1.5" fill="none" stroke="#9E9E9E" stroke-width="1.6"/></svg>
<svg class="a" style="left:220px;top:172px;" width="18" height="17" viewBox="0 0 18 17"><text x="2.6" y="12.2" font-family="Liberation Serif" font-style="italic" font-size="14" fill="#4A4A4A" stroke="#4A4A4A" stroke-width="0.35">f</text><text x="8" y="12.5" font-family="Liberation Serif" font-style="italic" font-size="10" fill="#4A4A4A" stroke="#4A4A4A" stroke-width="0.35">x</text></svg>
<div class="t" style="left:263.40px;top:175.00px;font-size:12px;line-height:15px;color:#262626;transform:scaleX(1.0400);transform-origin:0 0;">=СРЗНАЧ(B2:B8)</div>
<svg class="a" style="left:1009px;top:177px;" width="10" height="7" viewBox="0 0 10 7"><path d="M1.5 1.5L5 5L8.5 1.5" fill="none" stroke="#555" stroke-width="1.5"/></svg>
<div class="a" style="left:246px;top:163px;width:122px;height:37px;border:3px solid #FF0000;border-radius:10px"></div>
<div class="a" style="left:1px;top:204px;width:1008px;height:19px;background:#E6E6E6;"></div>
<div class="a" style="left:27px;top:224px;width:978px;height:453px;background:#fff;"></div>
<svg class="a" style="left:0px;top:0px;position:absolute;pointer-events:none" width="1025" height="728" viewBox="0 0 1025 728"><rect x="90" y="223" width="1" height="454" fill="#D4D4D4"/><rect x="154" y="223" width="1" height="454" fill="#D4D4D4"/><rect x="218" y="223" width="1" height="454" fill="#D4D4D4"/><rect x="282" y="223" width="1" height="454" fill="#D4D4D4"/><rect x="346" y="223" width="1" height="454" fill="#D4D4D4"/><rect x="410" y="223" width="1" height="454" fill="#D4D4D4"/><rect x="474" y="223" width="1" height="454" fill="#D4D4D4"/><rect x="538" y="223" width="1" height="454" fill="#D4D4D4"/><rect x="602" y="223" width="1" height="454" fill="#D4D4D4"/><rect x="666" y="223" width="1" height="454" fill="#D4D4D4"/><rect x="730" y="223" width="1" height="454" fill="#D4D4D4"/><rect x="794" y="223" width="1" height="454" fill="#D4D4D4"/><rect x="858" y="223" width="1" height="454" fill="#D4D4D4"/><rect x="922" y="223" width="1" height="454" fill="#D4D4D4"/><rect x="986" y="223" width="1" height="454" fill="#D4D4D4"/><rect x="26" y="243" width="979" height="1" fill="#D4D4D4"/><rect x="26" y="263" width="979" height="1" fill="#D4D4D4"/><rect x="26" y="283" width="979" height="1" fill="#D4D4D4"/><rect x="26" y="303" width="979" height="1" fill="#D4D4D4"/><rect x="26" y="323" width="979" height="1" fill="#D4D4D4"/><rect x="26" y="343" width="979" height="1" fill="#D4D4D4"/><rect x="26" y="363" width="979" height="1" fill="#D4D4D4"/><rect x="26" y="383" width="979" height="1" fill="#D4D4D4"/><rect x="26" y="403" width="979" height="1" fill="#D4D4D4"/><rect x="26" y="423" width="979" height="1" fill="#D4D4D4"/><rect x="26" y="443" width="979" height="1" fill="#D4D4D4"/><rect x="26" y="463" width="979" height="1" fill="#D4D4D4"/><rect x="26" y="483" width="979" height="1" fill="#D4D4D4"/><rect x="26" y="503" width="979" height="1" fill="#D4D4D4"/><rect x="26" y="523" width="979" height="1" fill="#D4D4D4"/><rect x="26" y="543" width="979" height="1" fill="#D4D4D4"/><rect x="26" y="563" width="979" height="1" fill="#D4D4D4"/><rect x="26" y="583" width="979" height="1" fill="#D4D4D4"/><rect x="26" y="603" width="979" height="1" fill="#D4D4D4"/><rect x="26" y="623" width="979" height="1" fill="#D4D4D4"/><rect x="26" y="643" width="979" height="1" fill="#D4D4D4"/><rect x="26" y="663" width="979" height="1" fill="#D4D4D4"/></svg>
<div class="a" style="left:90px;top:204px;width:1px;height:3px;background:#DCDCDC;"></div>
<div class="a" style="left:90px;top:207px;width:1px;height:10px;background:#C4C4C4;"></div>
<div class="a" style="left:90px;top:217px;width:1px;height:6px;background:#949A98;"></div>
<div class="a" style="left:154px;top:204px;width:1px;height:3px;background:#DCDCDC;"></div>
<div class="a" style="left:154px;top:207px;width:1px;height:10px;background:#C4C4C4;"></div>
<div class="a" style="left:154px;top:217px;width:1px;height:6px;background:#949A98;"></div>
<div class="a" style="left:218px;top:204px;width:1px;height:3px;background:#DCDCDC;"></div>
<div class="a" style="left:218px;top:207px;width:1px;height:10px;background:#C4C4C4;"></div>
<div class="a" style="left:218px;top:217px;width:1px;height:6px;background:#949A98;"></div>
<div class="a" style="left:282px;top:204px;width:1px;height:3px;background:#DCDCDC;"></div>
<div class="a" style="left:282px;top:207px;width:1px;height:10px;background:#C4C4C4;"></div>
<div class="a" style="left:282px;top:217px;width:1px;height:6px;background:#949A98;"></div>
<div class="a" style="left:346px;top:204px;width:1px;height:3px;background:#DCDCDC;"></div>
<div class="a" style="left:346px;top:207px;width:1px;height:10px;background:#C4C4C4;"></div>
<div class="a" style="left:346px;top:217px;width:1px;height:6px;background:#949A98;"></div>
<div class="a" style="left:410px;top:204px;width:1px;height:3px;background:#DCDCDC;"></div>
<div class="a" style="left:410px;top:207px;width:1px;height:10px;background:#C4C4C4;"></div>
<div class="a" style="left:410px;top:217px;width:1px;height:6px;background:#949A98;"></div>
<div class="a" style="left:474px;top:204px;width:1px;height:3px;background:#DCDCDC;"></div>
<div class="a" style="left:474px;top:207px;width:1px;height:10px;background:#C4C4C4;"></div>
<div class="a" style="left:474px;top:217px;width:1px;height:6px;background:#949A98;"></div>
<div class="a" style="left:538px;top:204px;width:1px;height:3px;background:#DCDCDC;"></div>
<div class="a" style="left:538px;top:207px;width:1px;height:10px;background:#C4C4C4;"></div>
<div class="a" style="left:538px;top:217px;width:1px;height:6px;background:#949A98;"></div>
<div class="a" style="left:602px;top:204px;width:1px;height:3px;background:#DCDCDC;"></div>
<div class="a" style="left:602px;top:207px;width:1px;height:10px;background:#C4C4C4;"></div>
<div class="a" style="left:602px;top:217px;width:1px;height:6px;background:#949A98;"></div>
<div class="a" style="left:666px;top:204px;width:1px;height:3px;background:#DCDCDC;"></div>
<div class="a" style="left:666px;top:207px;width:1px;height:10px;background:#C4C4C4;"></div>
<div class="a" style="left:666px;top:217px;width:1px;height:6px;background:#949A98;"></div>
<div class="a" style="left:730px;top:204px;width:1px;height:3px;background:#DCDCDC;"></div>
<div class="a" style="left:730px;top:207px;width:1px;height:10px;background:#C4C4C4;"></div>
<div class="a" style="left:730px;top:217px;width:1px;height:6px;background:#949A98;"></div>
<div class="a" style="left:794px;top:204px;width:1px;height:3px;background:#DCDCDC;"></div>
<div class="a" style="left:794px;top:207px;width:1px;height:10px;background:#C4C4C4;"></div>
<div class="a" style="left:794px;top:217px;width:1px;height:6px;background:#949A98;"></div>
<div class="a" style="left:858px;top:204px;width:1px;height:3px;background:#DCDCDC;"></div>
<div class="a" style="left:858px;top:207px;width:1px;height:10px;background:#C4C4C4;"></div>
<div class="a" style="left:858px;top:217px;width:1px;height:6px;background:#949A98;"></div>
<div class="a" style="left:922px;top:204px;width:1px;height:3px;background:#DCDCDC;"></div>
<div class="a" style="left:922px;top:207px;width:1px;height:10px;background:#C4C4C4;"></div>
<div class="a" style="left:922px;top:217px;width:1px;height:6px;background:#949A98;"></div>
<div class="a" style="left:986px;top:204px;width:1px;height:3px;background:#DCDCDC;"></div>
<div class="a" style="left:986px;top:207px;width:1px;height:10px;background:#C4C4C4;"></div>
<div class="a" style="left:986px;top:217px;width:1px;height:6px;background:#949A98;"></div>
<div class="a" style="left:26px;top:204px;width:1px;height:473px;background:#9EA3A1;"></div>
<div class="a" style="left:1px;top:223px;width:1005px;height:1px;background:#9EA3A1;"></div>
<div class="a" style="left:1005px;top:223px;width:1px;height:455px;background:#9EA3A1;"></div>
<div class="a" style="left:1px;top:677px;width:1005px;height:1px;background:#9EA3A1;"></div>
<div class="a" style="left:91px;top:204px;width:63px;height:18px;background:#D2D2D2;"></div>
<div class="a" style="left:90px;top:204px;width:1px;height:19px;background:#9EA3A1;"></div>
<div class="a" style="left:90px;top:222px;width:65px;height:2px;background:#217346;"></div>
<svg class="a" style="left:11px;top:208px;" width="13" height="13" viewBox="0 0 13 13"><path d="M12 0.5V12H0.5z" fill="#C6C6C6"/></svg>
<div class="t" style="left:27px;top:205.5px;width:63px;text-align:center;font-size:11.5px;line-height:19px;color:#262626">A</div>
<div class="t" style="left:91px;top:205.5px;width:63px;text-align:center;font-size:11.5px;line-height:19px;color:#217346">B</div>
<div class="t" style="left:155px;top:205.5px;width:63px;text-align:center;font-size:11.5px;line-height:19px;color:#262626">C</div>
<div class="t" style="left:219px;top:205.5px;width:63px;text-align:center;font-size:11.5px;line-height:19px;color:#262626">D</div>
<div class="t" style="left:283px;top:205.5px;width:63px;text-align:center;font-size:11.5px;line-height:19px;color:#262626">E</div>
<div class="t" style="left:347px;top:205.5px;width:63px;text-align:center;font-size:11.5px;line-height:19px;color:#262626">F</div>
<div class="t" style="left:411px;top:205.5px;width:63px;text-align:center;font-size:11.5px;line-height:19px;color:#262626">G</div>
<div class="t" style="left:475px;top:205.5px;width:63px;text-align:center;font-size:11.5px;line-height:19px;color:#262626">H</div>
<div class="t" style="left:539px;top:205.5px;width:63px;text-align:center;font-size:11.5px;line-height:19px;color:#262626">I</div>
<div class="t" style="left:603px;top:205.5px;width:63px;text-align:center;font-size:11.5px;line-height:19px;color:#262626">J</div>
<div class="t" style="left:667px;top:205.5px;width:63px;text-align:center;font-size:11.5px;line-height:19px;color:#262626">K</div>
<div class="t" style="left:731px;top:205.5px;width:63px;text-align:center;font-size:11.5px;line-height:19px;color:#262626">L</div>
<div class="t" style="left:795px;top:205.5px;width:63px;text-align:center;font-size:11.5px;line-height:19px;color:#262626">M</div>
<div class="t" style="left:859px;top:205.5px;width:63px;text-align:center;font-size:11.5px;line-height:19px;color:#262626">N</div>
<div class="t" style="left:923px;top:205.5px;width:63px;text-align:center;font-size:11.5px;line-height:19px;color:#262626">O</div>
<div class="a" style="left:1px;top:224px;width:25px;height:453px;background:#E6E6E6;"></div>
<div class="t" style="left:1.5px;top:226.30px;width:25px;text-align:center;font-size:12.5px;line-height:19px;color:#262626">1</div>
<div class="a" style="left:1px;top:243px;width:25px;height:1px;background:#D0D0D0;"></div>
<div class="t" style="left:1.5px;top:246.30px;width:25px;text-align:center;font-size:12.5px;line-height:19px;color:#262626">2</div>
<div class="a" style="left:1px;top:263px;width:25px;height:1px;background:#D0D0D0;"></div>
<div class="t" style="left:1.5px;top:266.30px;width:25px;text-align:center;font-size:12.5px;line-height:19px;color:#262626">3</div>
<div class="a" style="left:1px;top:283px;width:25px;height:1px;background:#D0D0D0;"></div>
<div class="t" style="left:1.5px;top:286.30px;width:25px;text-align:center;font-size:12.5px;line-height:19px;color:#262626">4</div>
<div class="a" style="left:1px;top:303px;width:25px;height:1px;background:#D0D0D0;"></div>
<div class="t" style="left:1.5px;top:306.30px;width:25px;text-align:center;font-size:12.5px;line-height:19px;color:#262626">5</div>
<div class="a" style="left:1px;top:323px;width:25px;height:1px;background:#D0D0D0;"></div>
<div class="t" style="left:1.5px;top:326.30px;width:25px;text-align:center;font-size:12.5px;line-height:19px;color:#262626">6</div>
<div class="a" style="left:1px;top:343px;width:25px;height:1px;background:#D0D0D0;"></div>
<div class="t" style="left:1.5px;top:346.30px;width:25px;text-align:center;font-size:12.5px;line-height:19px;color:#262626">7</div>
<div class="a" style="left:1px;top:363px;width:25px;height:1px;background:#D0D0D0;"></div>
<div class="t" style="left:1.5px;top:366.30px;width:25px;text-align:center;font-size:12.5px;line-height:19px;color:#262626">8</div>
<div class="a" style="left:1px;top:383px;width:25px;height:1px;background:#D0D0D0;"></div>
<div class="a" style="left:1px;top:384px;width:24px;height:19px;background:#D2D2D2;"></div>
<div class="a" style="left:25px;top:383px;width:2px;height:21px;background:#217346;"></div>
<div class="t" style="left:1.5px;top:386.30px;width:25px;text-align:center;font-size:12.5px;line-height:19px;color:#217346">9</div>
<div class="a" style="left:1px;top:403px;width:25px;height:1px;background:#D0D0D0;"></div>
<div class="t" style="left:1.5px;top:406.30px;width:25px;text-align:center;font-size:12.5px;line-height:19px;color:#262626">10</div>
<div class="a" style="left:1px;top:423px;width:25px;height:1px;background:#D0D0D0;"></div>
<div class="t" style="left:1.5px;top:426.30px;width:25px;text-align:center;font-size:12.5px;line-height:19px;color:#262626">11</div>
<div class="a" style="left:1px;top:443px;width:25px;height:1px;background:#D0D0D0;"></div>
<div class="t" style="left:1.5px;top:446.30px;width:25px;text-align:center;font-size:12.5px;line-height:19px;color:#262626">12</div>
<div class="a" style="left:1px;top:463px;width:25px;height:1px;background:#D0D0D0;"></div>
<div class="t" style="left:1.5px;top:466.30px;width:25px;text-align:center;font-size:12.5px;line-height:19px;color:#262626">13</div>
<div class="a" style="left:1px;top:483px;width:25px;height:1px;background:#D0D0D0;"></div>
<div class="t" style="left:1.5px;top:486.30px;width:25px;text-align:center;font-size:12.5px;line-height:19px;color:#262626">14</div>
<div class="a" style="left:1px;top:503px;width:25px;height:1px;background:#D0D0D0;"></div>
<div class="t" style="left:1.5px;top:506.30px;width:25px;text-align:center;font-size:12.5px;line-height:19px;color:#262626">15</div>
<div class="a" style="left:1px;top:523px;width:25px;height:1px;background:#D0D0D0;"></div>
<div class="t" style="left:1.5px;top:526.30px;width:25px;text-align:center;font-size:12.5px;line-height:19px;color:#262626">16</div>
<div class="a" style="left:1px;top:543px;width:25px;height:1px;background:#D0D0D0;"></div>
<div class="t" style="left:1.5px;top:546.30px;width:25px;text-align:center;font-size:12.5px;line-height:19px;color:#262626">17</div>
<div class="a" style="left:1px;top:563px;width:25px;height:1px;background:#D0D0D0;"></div>
<div class="t" style="left:1.5px;top:566.30px;width:25px;text-align:center;font-size:12.5px;line-height:19px;color:#262626">18</div>
<div class="a" style="left:1px;top:583px;width:25px;height:1px;background:#D0D0D0;"></div>
<div class="t" style="left:1.5px;top:586.30px;width:25px;text-align:center;font-size:12.5px;line-height:19px;color:#262626">19</div>
<div class="a" style="left:1px;top:603px;width:25px;height:1px;background:#D0D0D0;"></div>
<div class="t" style="left:1.5px;top:606.30px;width:25px;text-align:center;font-size:12.5px;line-height:19px;color:#262626">20</div>
<div class="a" style="left:1px;top:623px;width:25px;height:1px;background:#D0D0D0;"></div>
<div class="t" style="left:1.5px;top:626.30px;width:25px;text-align:center;font-size:12.5px;line-height:19px;color:#262626">21</div>
<div class="a" style="left:1px;top:643px;width:25px;height:1px;background:#D0D0D0;"></div>
<div class="t" style="left:1.5px;top:646.30px;width:25px;text-align:center;font-size:12.5px;line-height:19px;color:#262626">22</div>
<div class="a" style="left:1px;top:663px;width:25px;height:1px;background:#D0D0D0;"></div>
<div class="t" style="left:1.5px;top:666.30px;width:25px;text-align:center;font-size:12.5px;line-height:19px;color:#262626">23</div>
<div class="t" style="left:91px;top:245.90px;width:61.3px;text-align:right;font-size:12.5px;line-height:19px;color:#000">15</div>
<div class="t" style="left:91px;top:265.90px;width:61.3px;text-align:right;font-size:12.5px;line-height:19px;color:#000">20</div>
<div class="t" style="left:91px;top:285.90px;width:61.3px;text-align:right;font-size:12.5px;line-height:19px;color:#000">17</div>
<div class="t" style="left:91px;top:305.90px;width:61.3px;text-align:right;font-size:12.5px;line-height:19px;color:#000">22</div>
<div class="t" style="left:91px;top:325.90px;width:61.3px;text-align:right;font-size:12.5px;line-height:19px;color:#000">35</div>
<div class="t" style="left:91px;top:345.90px;width:61.3px;text-align:right;font-size:12.5px;line-height:19px;color:#000">109</div>
<div class="t" style="left:91px;top:365.90px;width:61.3px;text-align:right;font-size:12.5px;line-height:19px;color:#000">55</div>
<div class="t" style="left:91px;top:385.90px;width:61.3px;text-align:right;font-size:12.5px;line-height:19px;color:#000">39</div>
<div class="a" style="left:89px;top:382px;width:67px;height:23px;border:2px solid #217346"></div>
<div class="a" style="left:151px;top:400px;width:7px;height:7px;background:#fff;"></div>
<div class="a" style="left:152px;top:401px;width:5px;height:5px;background:#217346;"></div>
<div class="a" style="left:85px;top:379px;width:78px;height:32px;border:3px solid #FF0000;border-radius:9px"></div>
<div class="a" style="left:1006px;top:204px;width:19px;height:473px;background:#E6E6E6;"></div>
<div class="a" style="left:1009px;top:221px;width:15px;height:420px;background:#fff;border:1px solid #C6C6C6"></div>
<div class="a" style="left:1009px;top:641px;width:15px;height:22px;background:#DCDCDC;"></div>
<div class="a" style="left:1009px;top:206px;width:15px;height:15px;background:#fff;border:1px solid #C6C6C6"></div>
<svg class="a" style="left:1012px;top:210px;" width="9" height="6" viewBox="0 0 9 6"><path d="M0.5 5.5L4.5 1L8.5 5.5z" fill="#555"/></svg>
<div class="a" style="left:1009px;top:663px;width:15px;height:14px;background:#fff;border:1px solid #C6C6C6"></div>
<svg class="a" style="left:1012px;top:667px;" width="9" height="6" viewBox="0 0 9 6"><path d="M0.5 0.5L4.5 5L8.5 0.5z" fill="#555"/></svg>
<div class="a" style="left:1px;top:678px;width:1024px;height:27px;background:#E6E6E6;"></div>
<svg class="a" style="left:26px;top:686px;" width="8" height="10" viewBox="0 0 8 10"><path d="M6 1L1.5 4.5L6 8z" fill="#BBBBBB"/></svg>
<svg class="a" style="left:55px;top:686px;" width="8" height="10" viewBox="0 0 8 10"><path d="M1.5 1L6 4.5L1.5 8z" fill="#BBBBBB"/></svg>
<div class="a" style="left:101px;top:677px;width:107px;height:25px;background:#fff;border-left:1px solid #9E9E9E;border-right:1px solid #9E9E9E"></div>
<div class="a" style="left:101px;top:700px;width:107px;height:2px;background:#217346;"></div>
<div class="t" style="left:113.00px;top:684.00px;font-size:12px;line-height:15px;color:#217346;font-weight:bold;transform:scaleX(1.0556);transform-origin:0 0;">microexcel.ru</div>
<svg class="a" style="left:240px;top:682px;" width="18" height="18" viewBox="0 0 18 18"><circle cx="9" cy="9" r="7.5" fill="none" stroke="#888" stroke-width="1.2"/><path d="M9 4.5v9M4.5 9h9" stroke="#888" stroke-width="1.5"/></svg>
<div class="a" style="left:616px;top:686px;width:2px;height:2px;background:#BBBBBB;"></div>
<div class="a" style="left:616px;top:690px;width:2px;height:2px;background:#BBBBBB;"></div>
<div class="a" style="left:616px;top:694px;width:2px;height:2px;background:#BBBBBB;"></div>
<div class="a" style="left:633px;top:684px;width:15px;height:15px;background:#fff;border:1px solid #C6C6C6"></div>
<svg class="a" style="left:637px;top:687px;" width="7" height="9" viewBox="0 0 7 9"><path d="M5.5 0.5L1 4.5L5.5 8.5z" fill="#555"/></svg>
<div class="a" style="left:647px;top:684px;width:322px;height:15px;background:#fff;border:1px solid #C6C6C6"></div>
<div class="a" style="left:969px;top:684px;width:22px;height:15px;background:#DCDCDC;"></div>
<div class="a" style="left:991px;top:684px;width:15px;height:15px;background:#fff;border:1px solid #C6C6C6"></div>
<svg class="a" style="left:995px;top:687px;" width="7" height="9" viewBox="0 0 7 9"><path d="M1 0.5L5.5 4.5L1 8.5z" fill="#555"/></svg>
<div class="a" style="left:1px;top:705px;width:1024px;height:1px;background:#C6C6C6;"></div>
<div class="a" style="left:1px;top:706px;width:1024px;height:21px;background:#F3F3F3;"></div>
<div class="a" style="left:0px;top:727px;width:1025px;height:1px;background:#007340;"></div>
<div class="t" style="left:9.50px;top:708.00px;font-size:11.2px;line-height:14px;color:#262626;transform:scaleX(1.0344);transform-origin:0 0;">Готово</div>
<svg class="a" style="left:72px;top:708px;" width="16" height="15" viewBox="0 0 16 15"><rect x="2.5" y="5.5" width="12" height="8" fill="#fff" stroke="#555"/><path d="M2.5 8h12M2.5 10.5h12M5.5 5.5v8M8.5 5.5v8M11.5 5.5v8" stroke="#999" stroke-width="0.8"/><circle cx="4" cy="3.8" r="2.7" fill="#555"/><path d="M6.6 2h7.9v2.5H6.6z" fill="#555"/></svg>
<div class="a" style="left:727px;top:706px;width:38px;height:21px;background:#D4D4D4;"></div>
<svg class="a" style="left:738px;top:708px;" width="16" height="16" viewBox="0 0 16 16"><rect x="1.5" y="1.5" width="13" height="13" fill="none" stroke="#555" stroke-width="1.2"/><path d="M1.5 5.8h13M1.5 10.2h13M5.8 1.5v13M10.2 1.5v13" stroke="#555" stroke-width="1.2"/></svg>
<svg class="a" style="left:776px;top:708px;" width="16" height="16" viewBox="0 0 16 16"><rect x="1.5" y="1.5" width="13" height="13" fill="none" stroke="#555" stroke-width="1.2"/><rect x="4.5" y="4" width="7" height="8.5" fill="none" stroke="#555"/><path d="M6 6.5h4M6 8.5h4M6 10.5h4" stroke="#555"/></svg>
<svg class="a" style="left:814px;top:708px;" width="16" height="16" viewBox="0 0 16 16"><rect x="1.5" y="1.5" width="13" height="12.5" fill="none" stroke="#555" stroke-width="1.1"/><path d="M4.5 1.5v5.5h6.5M7.5 1.5v5.5M11 1.5v5.5" fill="none" stroke="#555" stroke-width="1.1"/></svg>
<div class="a" style="left:846px;top:715px;width:6px;height:2px;background:#555;"></div>
<div class="a" style="left:856px;top:716px;width:100px;height:1px;background:#AAAAAA;"></div>
<div class="a" style="left:904px;top:710px;width:5px;height:11px;background:#666;"></div>
<div class="a" style="left:960px;top:715px;width:7px;height:2px;background:#555;"></div>
<div class="a" style="left:962.5px;top:712.5px;width:2px;height:7px;background:#555;"></div>
<div class="t" style="left:978.80px;top:708.00px;font-size:11.5px;line-height:14px;color:#262626;transform:scaleX(0.8650);transform-origin:0 0;">100 %</div>
</body></html>
